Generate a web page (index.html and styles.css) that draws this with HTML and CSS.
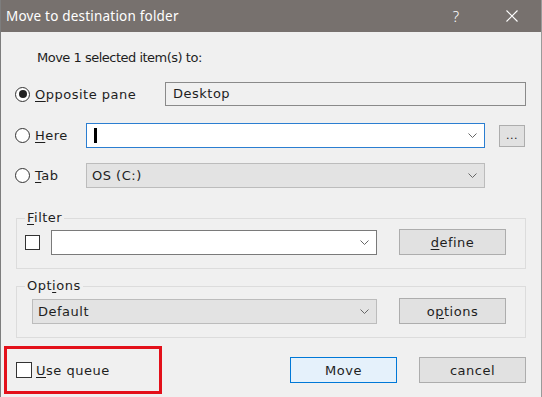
FILE: index.html
```html
<!DOCTYPE html>
<html lang="en">
<head>
    <meta charset="UTF-8">
    <meta name="viewport" content="width=device-width, initial-scale=1.0">
    <title>Move to destination folder</title>
    <link rel="stylesheet" href="styles.css">
</head>
<body>
    <div class="dialog">
        <div class="titlebar">
            <span class="title">Move to destination folder</span>
            <span class="help">?</span>
            <svg class="close" width="12" height="12" viewBox="0 0 12 12">
                <path d="M0.5 0.5L11.5 11.5M11.5 0.5L0.5 11.5" stroke="#fff" stroke-width="1.1" fill="none"/>
            </svg>
        </div>

        <div class="content">
            <p class="prompt">Move 1 selected item(s) to:</p>

            <div class="row row-pane">
                <label class="radio wide"><span class="dot checked"></span><span><u>O</u>pposite pane</span></label>
                <div class="field readonly">Desktop</div>
            </div>

            <div class="row row-here">
                <label class="radio"><span class="dot"></span><span><u>H</u>ere</span></label>
                <div class="combo edit focused">
                    <span class="caret"></span>
                    <svg class="chevron" width="9" height="5" viewBox="0 0 9 5"><path d="M0.5 0.5L4.5 4.5L8.5 0.5" stroke="#666" fill="none"/></svg>
                </div>
                <button class="btn small">...</button>
            </div>

            <div class="row row-tab">
                <label class="radio"><span class="dot"></span><span><u>T</u>ab</span></label>
                <div class="combo list">
                    <span class="value">OS (C:)</span>
                    <svg class="chevron" width="9" height="5" viewBox="0 0 9 5"><path d="M0.5 0.5L4.5 4.5L8.5 0.5" stroke="#666" fill="none"/></svg>
                </div>
            </div>

            <fieldset class="group filter">
                <legend><u>F</u>ilter</legend>
                <div class="group-row">
                    <span class="check"></span>
                    <div class="combo edit filter-combo">
                        <span class="value"></span>
                        <svg class="chevron" width="9" height="5" viewBox="0 0 9 5"><path d="M0.5 0.5L4.5 4.5L8.5 0.5" stroke="#666" fill="none"/></svg>
                    </div>
                    <button class="btn"><u>d</u>efine</button>
                </div>
            </fieldset>

            <fieldset class="group options">
                <legend>Opt<u>i</u>ons</legend>
                <div class="group-row">
                    <div class="combo list options-combo">
                        <span class="value">Default</span>
                        <svg class="chevron" width="9" height="5" viewBox="0 0 9 5"><path d="M0.5 0.5L4.5 4.5L8.5 0.5" stroke="#666" fill="none"/></svg>
                    </div>
                    <button class="btn">o<u>p</u>tions</button>
                </div>
            </fieldset>
        </div>

        <div class="footer">
            <div class="highlight">
                <span class="check"></span>
                <span class="check-label"><u>U</u>se queue</span>
            </div>
            <button class="btn default">Move</button>
            <button class="btn">cancel</button>
        </div>
    </div>
</body>
</html>
```

FILE: styles.css
```css
/* Reset */
* {
    margin: 0;
    padding: 0;
    box-sizing: border-box;
}

body {
    font-family: "DejaVu Sans", Verdana, sans-serif;
    font-size: 13px;
    letter-spacing: 0.5px;
    color: #1e1e1e;
    background-color: #f0f0f0;
}

u {
    text-decoration: underline;
    text-underline-offset: 2px;
}

.dialog {
    width: 542px;
    height: 397px;
    background-color: #f0f0f0;
    border-left: 1px solid #7d7d7d;
    border-right: 1px solid #9a9a9a;
    overflow: hidden;
}

/* Title bar */
.titlebar {
    height: 32px;
    background-color: #77716e;
    color: #fff;
    display: flex;
    align-items: center;
    padding-left: 5px;
}

.title {
    font-family: "Noto Sans", "Open Sans", sans-serif;
    font-size: 13.5px;
    letter-spacing: 0.2px;
    flex: 1;
}

.help {
    font-family: "Noto Sans", sans-serif;
    font-size: 15px;
    font-weight: 300;
    letter-spacing: 0;
    margin-right: 47px;
}

.close {
    margin-right: 23px;
}

/* Main content */
.content {
    padding: 0 15px 0 14px;
}

.prompt {
    margin-top: 18px;
    line-height: 16px;
    padding-left: 22px;
    letter-spacing: -0.5px;
}

.row {
    display: flex;
    align-items: center;
}

.row-pane {
    margin-top: 16px;
    height: 24px;
}

.row-here {
    margin-top: 17px;
    height: 25px;
}

.row-tab {
    margin-top: 15px;
    height: 25px;
}

.radio {
    display: flex;
    align-items: center;
    width: 71px;
    flex-shrink: 0;
}

.radio.wide {
    width: 150px;
}

.dot {
    width: 15px;
    height: 15px;
    border: 1px solid #333;
    border-radius: 50%;
    background-color: #fff;
    margin-right: 5px;
    display: flex;
    align-items: center;
    justify-content: center;
}

.dot.checked::after {
    content: "";
    width: 8px;
    height: 8px;
    border-radius: 50%;
    background-color: #222;
}

.field {
    flex: 1;
    height: 24px;
    line-height: 22px;
    padding-left: 7px;
}

.readonly {
    border: 1px solid #8a8a8a;
    background-color: #f0f0f0;
}

/* Combo boxes */
.combo {
    display: flex;
    align-items: center;
    height: 25px;
    padding: 0 7px 0 5px;
}

.row .combo {
    width: 399px;
}

.combo .value {
    flex: 1;
}

.chevron {
    margin-left: auto;
}

.combo.edit {
    background-color: #fff;
    border: 1px solid #7a7a7a;
}

.combo.focused {
    border-color: #2b7ed1;
    padding-left: 7px;
}

.combo.list {
    background-color: #e3e3e3;
    border: 1px solid #bcbcbc;
}

.caret {
    width: 3px;
    height: 15px;
    background-color: #000;
}

/* Buttons */
.btn {
    font-family: "DejaVu Sans", Verdana, sans-serif;
    font-size: 13px;
    letter-spacing: 0.5px;
    color: #1e1e1e;
    background-color: #e1e1e1;
    border: 1px solid #adadad;
    width: 107px;
    height: 26px;
    flex-shrink: 0;
}

.btn.small {
    width: 26px;
    height: 22px;
    margin-left: 14px;
    font-size: 11px;
    line-height: 16px;
}

.btn.default {
    background-color: #e5f1fb;
    border-color: #0078d7;
    margin-left: auto;
    margin-right: 22px;
}

/* Group boxes */
.group {
    border: 1px solid #dcdcdc;
    margin: 22px 0 0 1px;
    padding: 0 18px 13px 8px;
    min-width: 0;
}

.group legend {
    line-height: 16px;
    padding: 0 2px;
}

.group.options {
    margin-top: 9px;
}

.group-row {
    display: flex;
    align-items: center;
    height: 26px;
    margin-top: 3px;
}

.options .group-row {
    margin-top: 4px;
}

.check {
    width: 15px;
    height: 15px;
    border: 1px solid #333;
    background-color: #fff;
    flex-shrink: 0;
}

.filter-combo {
    width: 326px;
    margin-left: 11px;
    margin-right: 22px;
}

.options-combo {
    width: 345px;
    margin-left: 7px;
    margin-right: 22px;
}

/* Footer */
.footer {
    display: flex;
    align-items: center;
    margin-top: 8px;
    padding: 0 15px 0 3px;
}

.highlight {
    width: 158px;
    height: 48px;
    border: 3px solid #e3101a;
    display: flex;
    align-items: center;
    padding-left: 9px;
}

.highlight .check {
    width: 16px;
    height: 16px;
    margin-right: 4px;
}
```
